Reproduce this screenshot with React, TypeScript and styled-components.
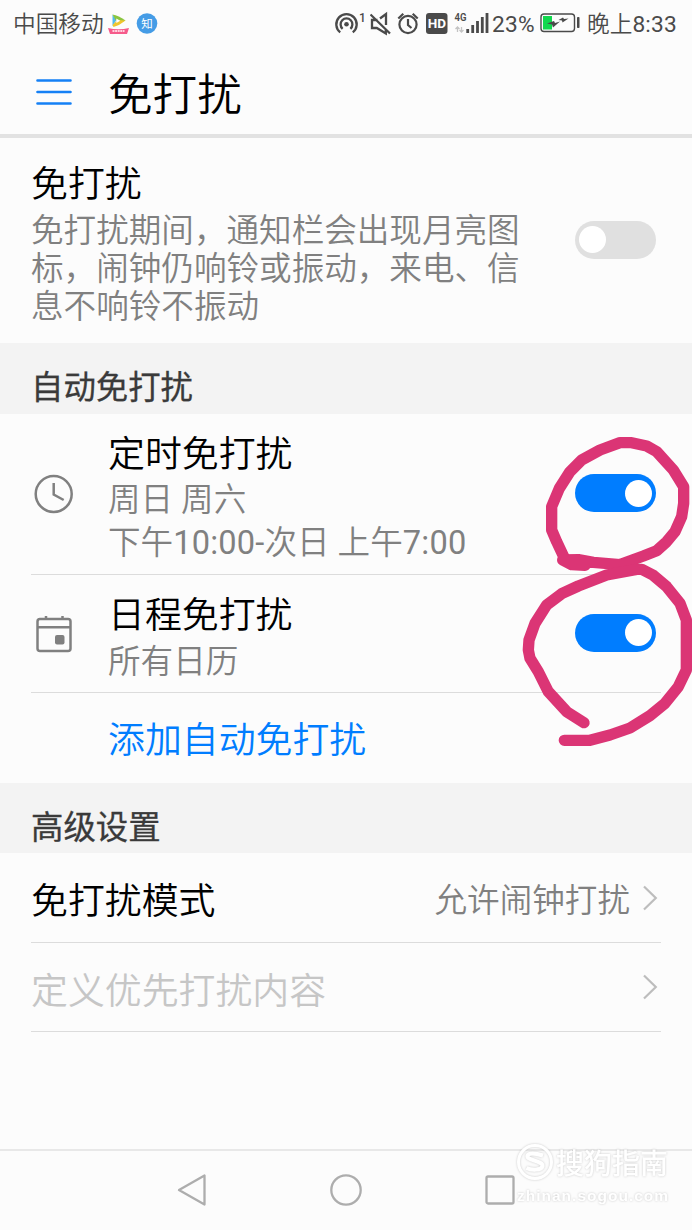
import React from "react";
import styled, { createGlobalStyle } from "styled-components";

const GlobalStyle = createGlobalStyle`
  * { box-sizing: border-box; }
  body { margin: 0; background: #fcfcfc; }
  svg { display: block; flex: none; }
`;

const Screen = styled.div`
  position: relative;
  display: flex;
  flex-direction: column;
  width: 692px;
  height: 1230px;
  overflow: hidden;
  background: #fcfcfc;
  color: #000;
  font-family: Roboto, "Noto Sans CJK SC", sans-serif;
  font-weight: 350;
  white-space: nowrap;
`;

const StatusBar = styled.div`
  display: flex;
  align-items: center;
  justify-content: space-between;
  height: 48px;
  padding: 0 14px 0 13px;
  color: #4a4a4a;
  font-size: 22.7px;
  line-height: 46px;
`;

const StatusGroup = styled.div`
  display: flex;
  align-items: center;
`;

const StatusText = styled.span<{ $width: number; $gap?: number }>`
  width: ${(p) => p.$width}px;
  margin-left: ${(p) => p.$gap ?? 0}px;
  padding-top: 2px;
`;

const Digits = styled.span`
  font-weight: 400;
  letter-spacing: 0.2px;
`;

const Header = styled.header`
  display: flex;
  align-items: center;
  height: 90px;
  padding: 2px 36px 0;
  border-bottom: 4px solid #e2e2e2;
`;

const HeaderTitle = styled.h1`
  margin: 0 0 0 36px;
  font-size: 44.6px;
  font-weight: 350;
  line-height: 56px;
  padding-top: 8px;
`;

const Row = styled.div<{ $height: number; $indent?: boolean }>`
  display: flex;
  align-items: center;
  height: ${(p) => p.$height}px;
  padding: 0 36px 0 ${(p) => (p.$indent ? 108 : 31)}px;
`;

const Divider = styled.div`
  height: 1px;
  margin: 0 31px;
  background: #dcdcdc;
`;

const RowIcon = styled.div`
  width: 77px;
  padding-left: 3px;
`;

const RowBody = styled.div<{ $drop?: number; $gap?: number }>`
  display: flex;
  flex: 1;
  flex-direction: column;
  gap: ${(p) => p.$gap ?? 0}px;
  padding-top: ${(p) => p.$drop ?? 7}px;
`;

const RowTitle = styled.div<{ $color?: string }>`
  font-size: 36.9px;
  line-height: 48px;
  color: ${(p) => p.$color ?? "#000"};
`;

const RowText = styled.div<{ $line: number }>`
  font-size: 32.6px;
  line-height: ${(p) => p.$line}px;
  color: #808080;
`;

const RowValue = styled.span`
  margin-right: 13px;
  padding-top: 6px;
  font-size: 32.6px;
  line-height: 44px;
  color: #808080;
`;

const SectionBand = styled.h2<{ $height: number }>`
  height: ${(p) => p.$height}px;
  margin: 0;
  padding: 10px 31px 0;
  background: #f3f3f3;
  color: #3a3a3a;
  font-size: 32.4px;
  font-weight: 400;
  line-height: 70px;
  -webkit-text-stroke: 0.3px #3a3a3a;
`;

const Track = styled.div<{ $on?: boolean }>`
  display: flex;
  flex: none;
  align-items: center;
  justify-content: ${(p) => (p.$on ? "flex-end" : "flex-start")};
  width: 81px;
  height: 38px;
  margin-bottom: 2px;
  padding: 0 4px;
  border-radius: 19px;
  background: ${(p) => (p.$on ? "#007dff" : "#e0e0e0")};
`;

const Knob = styled.div`
  width: 27px;
  height: 27px;
  border-radius: 50%;
  background: #fff;
`;

const NavBar = styled.nav`
  display: flex;
  align-items: center;
  justify-content: space-between;
  height: 81px;
  margin-top: auto;
  padding: 0 177px 1px;
  border-top: 2px solid #e8e8e8;
`;

const Scribble = styled.svg`
  position: absolute;
  left: 510px;
  top: 420px;
`;

const Watermark = styled.div`
  position: absolute;
  left: 515px;
  top: 1141px;
  width: 160px;
  color: #fff;
  filter: drop-shadow(0 0 1px rgba(0, 0, 0, 0.2));
`;

const WatermarkTop = styled.div`
  display: flex;
  align-items: center;
  height: 42px;
  gap: 1px;
  font-size: 28px;
  font-weight: 500;
`;

const WatermarkUrl = styled.div`
  padding: 3px 0 0 2px;
  font-family: "Liberation Sans", sans-serif;
  font-size: 15.5px;
  font-weight: 700;
  line-height: 20px;
  letter-spacing: 1px;
`;

const Switch = ({ on }: { on?: boolean }) => (
  <Track $on={on}>
    <Knob />
  </Track>
);

const ChevronIcon = styled.svg`
  margin-right: -2px;
`;

const Chevron = () => (
  <ChevronIcon width="15" height="26" viewBox="0 0 15 26" fill="none" stroke="#bdbdbd" strokeWidth="2.2">
    <path d="M1 1.5 12.8 13 1 24.5" />
  </ChevronIcon>
);

const StatusIcons = () => (
  <>
    {/* hotspot */}
    <svg width="37" height="30" viewBox="333 9 37 30" fill="none" stroke="#4a4a4a" strokeWidth="2.3">
      <circle cx="346.500" cy="24.300" r="2.300" fill="#4a4a4a" stroke="none" />
      <path d="M342.600 28.800a5.900 5.900 0 1 1 7.800 0M340.200 32.300a10.200 10.200 0 1 1 12.600 0" />
      <text x="359" y="21.500" fontSize="12" fontWeight="500" fill="#4a4a4a" stroke="none">1</text>
    </svg>
    {/* muted speaker */}
    <svg width="26" height="30" viewBox="370 9 26 30" fill="none" stroke="#4a4a4a" strokeWidth="2.300">
      <path d="M377.500 20h-5.500v8h4.800l9 5.500V30M380 18.500l6-4.500v11M370.500 14.500l19.500 19" />
    </svg>
    {/* alarm */}
    <svg width="28" height="30" viewBox="396 9 28 30" fill="none" stroke="#4a4a4a" strokeWidth="2.200">
      <circle cx="408" cy="24.500" r="8.600" />
      <path d="M408 19v6l3.500 3M398.300 18.500l5-4.700M417.700 18.500l-5-4.700" />
    </svg>
    {/* HD voice */}
    <svg width="28" height="30" viewBox="424 9 28 30">
      <rect x="426" y="13" width="21.500" height="21" rx="3" fill="#4a4a4a" />
      <text x="436.800" y="28.300" textAnchor="middle" fontSize="13.500" fontWeight="700" fill="#fff">HD</text>
    </svg>
    {/* mobile network */}
    <svg width="40" height="30" viewBox="452 9 40 30">
      <text x="454.500" y="21.300" fontSize="11.500" fontWeight="600" fill="#4a4a4a" textLength="12" lengthAdjust="spacingAndGlyphs">4G</text>
      <path d="M457.500 32v-5M455.500 29l2-2 2 2M461.500 27v5M459.500 30l2 2 2-2" fill="none" stroke="#c4c4c4" strokeWidth="1.300" />
      <path d="M467.700 33v-4M472.700 33v-8M477.500 33v-12M482.300 33v-16M487 33v-20" stroke="#4a4a4a" strokeWidth="2.800" />
    </svg>
  </>
);

const Battery = () => (
  <svg width="40" height="30" viewBox="540 9 40 30">
    <rect x="541" y="14" width="33.500" height="17.500" rx="3" fill="none" stroke="#4a4a4a" strokeWidth="1.400" />
    <rect x="543" y="16" width="9" height="13.500" fill="#12d84e" />
    <path d="M547 23.500l7-2.500 1 2 5-1.500-7 6-1-3zM558.500 20l4.500-2.500 1 1.500 4.500-.5-6 4-.5-2z" fill="#4a4a4a" />
    <rect x="577" y="17" width="2.500" height="11" rx=".8" fill="#4a4a4a" />
  </svg>
);

const AppIcons = () => (
  <svg width="54" height="30" viewBox="106 9 54 30">
    <path d="M112.500 14.500v11.500l4-6z" fill="#54b9ec" />
    <path d="M112.500 14.500q6 1 13 6l-6 2.500-4-3z" fill="#8bc53f" />
    <path d="M125.500 20.500q-6 5-12 6.500l-1-2 5-5z" fill="#f0c52e" />
    <path d="M116.300 18.500v4.500l4-2.200z" fill="#fff" />
    <path d="M108 28q10.500 2.500 21 0l-2 6h-17z" fill="#f65b8b" />
    <path d="M112.500 31h12" stroke="#ffd3e0" strokeWidth="1.800" strokeDasharray="2 .6" />
    <circle cx="147" cy="23.500" r="10.300" fill="#459ce6" />
    <text x="147" y="27.800" textAnchor="middle" fontSize="11.500" fontWeight="400" fill="#fff">知</text>
  </svg>
);

const ClockIcon = () => (
  <svg width="40" height="40" viewBox="0 0 40 40" fill="none" stroke="#808080" strokeWidth="2.500">
    <circle cx="19.700" cy="20" r="18" />
    <path d="M19.700 9v11.500l10 5.500" />
  </svg>
);

const CalendarIcon = () => (
  <svg width="40" height="40" viewBox="0 0 40 40" fill="none" stroke="#808080" strokeWidth="2.500">
    <rect x="3.500" y="5" width="33" height="32" rx="2.500" />
    <path d="M3.500 13.200h33M12 5V2M28.500 5V2" />
    <rect x="21" y="21" width="9.500" height="9.500" rx="2" fill="#808080" stroke="none" />
  </svg>
);

export default function App() {
  return (
    <Screen>
      <GlobalStyle />
      <StatusBar>
        <StatusGroup>
          <StatusText $width={93}>中国移动</StatusText>
          <AppIcons />
        </StatusGroup>
        <StatusGroup>
          <StatusIcons />
          <StatusText $width={48}>
            <Digits>23%</Digits>
          </StatusText>
          <Battery />
          <StatusText $width={91} $gap={7}>
            晚上<Digits>8:33</Digits>
          </StatusText>
        </StatusGroup>
      </StatusBar>

      <Header>
        <svg width="36" height="28" viewBox="0 0 36 28" stroke="#1580f5" strokeWidth="2.600" strokeLinecap="round">
          <path d="M1.500 2.500h33M1.500 14h33M1.500 25.500h33" />
        </svg>
        <HeaderTitle>免打扰</HeaderTitle>
      </Header>

      <Row $height={205}>
        <RowBody $drop={6} $gap={3}>
          <RowTitle>免打扰</RowTitle>
          <RowText $line={38}>
            免打扰期间，通知栏会出现月亮图
            <br />
            标，闹钟仍响铃或振动，来电、信
            <br />
            息不响铃不振动
          </RowText>
        </RowBody>
        <Switch />
      </Row>

      <SectionBand $height={71}>自动免打扰</SectionBand>
      <Row $height={160}>
        <RowIcon>
          <ClockIcon />
        </RowIcon>
        <RowBody>
          <RowTitle>定时免打扰</RowTitle>
          <RowText $line={43}>周日 周六</RowText>
          <RowText $line={43}>
            下午<Digits>10:00-</Digits>次日 上午<Digits>7:00</Digits>
          </RowText>
        </RowBody>
        <Switch on />
      </Row>
      <Divider />
      <Row $height={117}>
        <RowIcon>
          <CalendarIcon />
        </RowIcon>
        <RowBody $drop={8}>
          <RowTitle>日程免打扰</RowTitle>
          <RowText $line={44}>所有日历</RowText>
        </RowBody>
        <Switch on />
      </Row>
      <Divider />
      <Row $height={90} $indent>
        <RowBody $drop={6}>
          <RowTitle $color="#007dff">添加自动免打扰</RowTitle>
        </RowBody>
      </Row>

      <SectionBand $height={70}>高级设置</SectionBand>
      <Row $height={89}>
        <RowBody $drop={9}>
          <RowTitle>免打扰模式</RowTitle>
        </RowBody>
        <RowValue>允许闹钟打扰</RowValue>
        <Chevron />
      </Row>
      <Divider />
      <Row $height={88}>
        <RowBody $drop={9}>
          <RowTitle $color="#c6c6c6">定义优先打扰内容</RowTitle>
        </RowBody>
        <Chevron />
      </Row>
      <Divider />

      <NavBar>
        <svg width="30" height="34" viewBox="0 0 30 34" fill="none" stroke="#adadad" strokeWidth="2.300" strokeLinejoin="round">
          <path d="M2 17 27.500 2.500v29z" />
        </svg>
        <svg width="34" height="34" viewBox="0 0 34 34" fill="none" stroke="#adadad" strokeWidth="2.300">
          <circle cx="17" cy="17" r="14.700" />
        </svg>
        <svg width="30" height="34" viewBox="0 0 30 34" fill="none" stroke="#adadad" strokeWidth="2.300">
          <rect x="1.500" y="3.500" width="27" height="27" rx="1.500" />
        </svg>
      </NavBar>

      <Scribble width="182" height="340" viewBox="0 0 546 1020" fill="none" stroke="#db3575" strokeWidth="34" strokeLinecap="round" strokeLinejoin="round">
        <path d="M165 418 140 365 125 330V260L148 205 180 155 215 120 270 90 330 68H365L410 78 440 95 490 150 521 200V250L515 290 495 335 470 365 440 392 400 408 330 434 250 427 205 419 158 420 185 434 225 436" />
        <path d="M222 908 170 875 115 815 85 755 60 715 55 690 57 660 75 610 110 555 155 521 205 498 290 465 380 448H395L430 466 470 500 510 550 529 600V750L505 800 465 850 420 887 360 924 300 945 240 961H163" />
      </Scribble>

      <Watermark>
        <WatermarkTop>
          <svg width="40" height="40" viewBox="0 0 40 40" fill="none" stroke="#fff" strokeWidth="3">
            <circle cx="20" cy="20" r="16.500" />
            <path d="M28 13.500q-13-4-15.500 0c-1.500 5 15.500 5 15 10.500-1 5-12 4-16 2" strokeWidth="4" />
          </svg>
          搜狗指南
        </WatermarkTop>
        <WatermarkUrl>zhinan.sogou.com</WatermarkUrl>
      </Watermark>
    </Screen>
  );
}
